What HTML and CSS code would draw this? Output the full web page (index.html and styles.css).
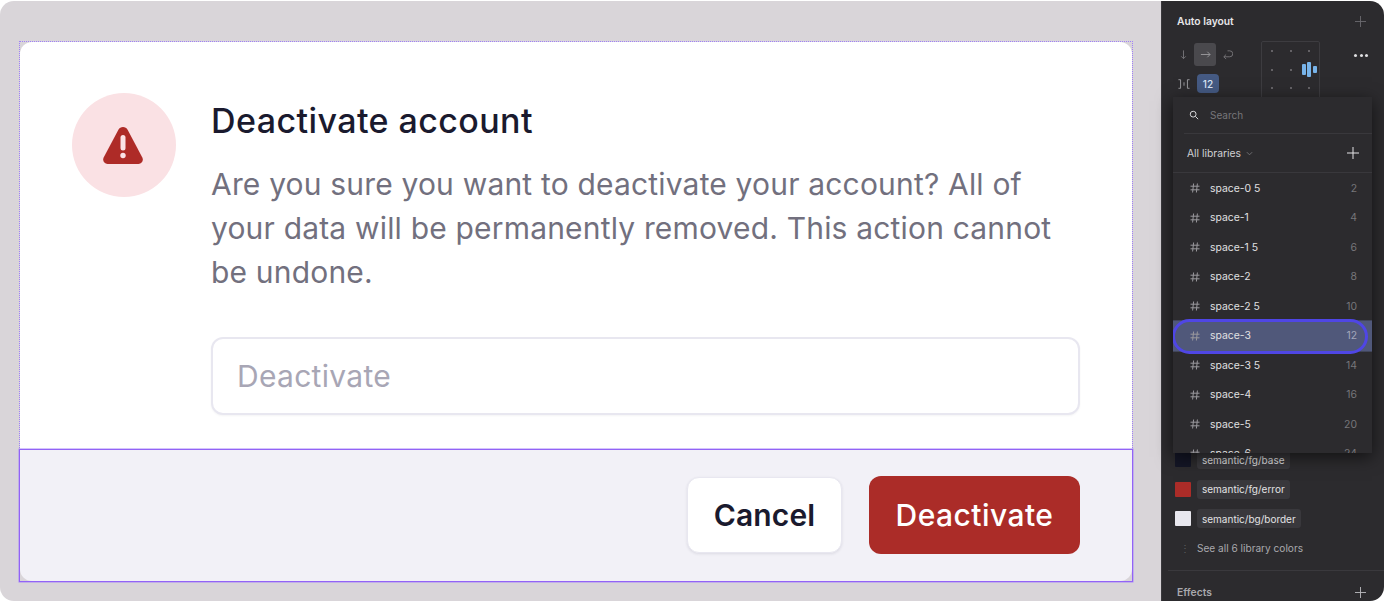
FILE: index.html
```html
<!DOCTYPE html>
<html lang="en">
<head>
<meta charset="utf-8">
<title>Deactivate account</title>
<link rel="stylesheet" href="styles.css">
</head>
<body>
<svg class="defs" width="0" height="0"><defs><symbol id="hash" viewBox="0 0 10 10"><path d="M3.600.5L2.600 9.500M7.400.5L6.400 9.500M.5 3.200h9M.5 6.800h9"/></symbol></defs></svg>
<div class="screen">
  <main class="canvas">
    <section class="dialog">
      <div class="dialog-body">
        <div class="alert-badge">
          <svg width="40" height="37" viewBox="0 0 40 37"><path d="M20 0c2 0 3.600 1 4.600 2.800l14.600 27.400c1.700 3.200-.3 6.800-3.700 6.800H4.500C1.100 37-.9 33.400.8 30.200L15.400 2.800C16.400 1 18 0 20 0z" fill="#ae2b27"/><rect x="17.500" y="8" width="5" height="15.500" rx="2.500" fill="#fbe2e5"/><circle cx="20" cy="28.500" r="2.700" fill="#fbe2e5"/></svg>
        </div>
        <div class="dialog-copy">
          <h1 class="dialog-title">Deactivate account</h1>
          <p class="dialog-text">Are you sure you want to deactivate your account? All of your data will be permanently removed. This action cannot be undone.</p>
          <div class="confirm-input">Deactivate</div>
        </div>
      </div>
      <footer class="dialog-footer">
        <div class="footer-fill">
          <button class="btn btn-cancel">Cancel</button>
          <button class="btn btn-danger">Deactivate</button>
        </div>
      </footer>
    </section>
  </main>
  <aside class="panel">
    <div class="panel-top">
      <div class="section-head"><span class="section-title">Auto layout</span>
        <svg class="plus dim" viewBox="0 0 12 12"><path d="M6 0v12M0 6h12"/></svg></div>
      <div class="auto-grid">
        <div class="auto-controls">
          <div class="dir-row">
            <span class="dir"><svg viewBox="0 0 12 12"><path d="M6 1.500v9M3.500 8L6 10.500 8.500 8"/></svg></span>
            <span class="dir dir-active"><svg viewBox="0 0 12 12"><path d="M1 6h10M8 3l3 3-3 3"/></svg></span>
            <span class="dir"><svg viewBox="0 0 12 12"><path d="M6 2h2.500a3.250 3.250 0 0 1 0 6.500H2M4.500 6L2 8.500 4.500 11"/></svg></span>
          </div>
          <div class="gap-row">
            <svg class="gap-icon" viewBox="0 0 14 12"><path d="M.5 1H3v10H.5M13.500 1H11v10h2.500M7 4v4"/></svg>
            <span class="gap-value">12</span>
          </div>
        </div>
        <div class="align-box">
          <i></i><i></i><i></i><i></i><i></i>
          <span class="align-mark"><b></b><b></b><b></b></span>
          <i></i><i></i><i></i>
        </div>
        <span class="more"><u></u><u></u><u></u></span>
      </div>
    </div>
    <div class="panel-bottom">
      <div class="color-row"><span class="swatch swatch-base"></span><span class="color-name">semantic/fg/base</span></div>
      <div class="color-row"><span class="swatch swatch-error"></span><span class="color-name">semantic/fg/error</span></div>
      <div class="color-row"><span class="swatch swatch-border"></span><span class="color-name">semantic/bg/border</span></div>
      <div class="see-all"><span class="see-dots">⋮</span>See all 6 library colors</div>
      <div class="section-head effects"><span class="section-title dimmer">Effects</span>
        <svg class="plus" viewBox="0 0 12 12"><path d="M6 0v12M0 6h12"/></svg></div>
    </div>
    <div class="picker">
      <div class="picker-search">
        <svg viewBox="0 0 12 12"><circle cx="5" cy="5" r="3.500"/><path d="M7.600 7.600L11 11"/></svg>
        <span>Search</span>
      </div>
      <div class="picker-lib">
        <span class="lib-name">All libraries <svg viewBox="0 0 8 8"><path d="M1 2.500L4 5.500l3-3"/></svg></span>
        <svg class="plus bright" viewBox="0 0 12 12"><path d="M6 0v12M0 6h12"/></svg>
      </div>
      <ul class="picker-list">
        <li><svg class="hash"><use href="#hash"/></svg><span class="var">space-0 5</span><span class="num">2</span></li>
        <li><svg class="hash"><use href="#hash"/></svg><span class="var">space-1</span><span class="num">4</span></li>
        <li><svg class="hash"><use href="#hash"/></svg><span class="var">space-1 5</span><span class="num">6</span></li>
        <li><svg class="hash"><use href="#hash"/></svg><span class="var">space-2</span><span class="num">8</span></li>
        <li><svg class="hash"><use href="#hash"/></svg><span class="var">space-2 5</span><span class="num">10</span></li>
        <li class="selected"><svg class="hash"><use href="#hash"/></svg><span class="var">space-3</span><span class="num">12</span><span class="ring"></span></li>
        <li><svg class="hash"><use href="#hash"/></svg><span class="var">space-3 5</span><span class="num">14</span></li>
        <li><svg class="hash"><use href="#hash"/></svg><span class="var">space-4</span><span class="num">16</span></li>
        <li><svg class="hash"><use href="#hash"/></svg><span class="var">space-5</span><span class="num">20</span></li>
        <li><svg class="hash"><use href="#hash"/></svg><span class="var">space-6</span><span class="num">24</span></li>
      </ul>
    </div>
  </aside>
</div>
</body>
</html>
```
FILE: styles.css
```css
* { box-sizing: border-box; }
html, body { margin: 0; height: 100%; background: #fff; overflow: hidden; }
body { font-family: Inter, "Noto Sans", sans-serif; }
.defs { position: absolute; }
.screen { width: 1384px; height: 600px; display: flex; border-radius: 14px; overflow: hidden; margin-top: 1px; }

.canvas { width: 1161px; background: #d9d5d9; padding: 40px 0 0 19px; flex: none; }
.dialog { width: 1114px; height: 541px; display: flex; flex-direction: column; border: 1px dotted #9f7ff8; position: relative; }
.dialog-body { flex: 1; background: #fff; border-radius: 12px 12px 0 0; padding: 51px 52px 0 52px; display: flex; gap: 35px; }
.alert-badge { width: 104px; height: 104px; border-radius: 50%; background: #fae1e4; display: flex; align-items: center; justify-content: center; flex: none; padding-right: 2.500px; }
.dialog-copy { flex: 1; min-width: 0; }
.dialog-title { margin: 7px 0 0; font-size: 34px; line-height: 42px; font-weight: 500; color: #1a1a2e; letter-spacing: .42px; }
.dialog-text { margin: 20px 0 0; font-size: 30px; line-height: 44px; color: #72707e; letter-spacing: .18px; }
.confirm-input { margin-top: 43px; height: 78px; border: 2px solid #e8e7f0; border-radius: 12px; padding: 0 24px; display: flex; align-items: center; font-size: 30px; letter-spacing: .3px; color: #a8a6b5; background: #fff; box-shadow: 0 1px 2px rgba(30,30,60,.05); }
.dialog-footer { height: 133px; flex: none; border: 1px solid #9263f6; box-shadow: 0 0 0 .5px #a988f8; margin: 0 -1px -1px; }
.footer-fill { height: 100%; background: #f2f1f7; border-radius: 0 0 12px 12px; display: flex; justify-content: flex-end; align-items: center; gap: 27px; padding: 0 52px 2px 0; }
.btn { font-family: inherit; font-size: 30px; line-height: 1; border-radius: 12px; padding: 0; cursor: pointer; }
.btn-cancel { width: 155px; height: 76px; background: #fff; color: #1a1a2e; font-weight: 600; letter-spacing: .15px; border: 1px solid #e8e7f0; box-shadow: 0 1px 3px rgba(30,30,60,.1); }
.btn-danger { width: 211px; height: 78px; background: #ab2c28; color: #fff; font-weight: 500; border: 0; letter-spacing: .45px; }

.panel { flex: 1; background: #2c2b2e; position: relative; display: flex; flex-direction: column; justify-content: space-between; color: #eee; border-left: 1px solid #3a393d; }
.section-head { display: flex; align-items: center; justify-content: space-between; padding: 0 18px 0 15px; }
.panel-top .section-head { height: 40px; }
.section-title { font-size: 10.300px; font-weight: 600; color: #e6e6e8; }
.dimmer { color: #a9a9ad; }
.plus { width: 11px; height: 11px; fill: none; stroke: #b9b9bc; stroke-width: 1; flex: none; }
.plus.dim { stroke: #6a696d; }
.plus.bright { width: 12px; height: 12px; stroke: #e4e4e6; }

.auto-grid { display: flex; padding-left: 10px; align-items: flex-start; }
.auto-controls { width: 89px; padding-top: 2px; }
.dir-row { display: flex; height: 23px; align-items: center; }
.dir { width: 22px; height: 23px; display: flex; align-items: center; justify-content: center; border-radius: 3px; }
.dir svg { width: 11px; height: 11px; fill: none; stroke: #77767a; stroke-width: 1; }
.dir-active { background: #4a494d; }
.dir-active svg { stroke: #9b9a9e; }
.gap-row { display: flex; align-items: center; gap: 7px; margin-top: 8px; padding-left: 6px; }
.gap-icon { width: 12px; height: 12px; fill: none; stroke: #a9a9ad; stroke-width: 1; }
.gap-value { width: 22px; height: 19px; border-radius: 4px; background: #455a83; color: #dce6f5; font-size: 10px; font-weight: 500; display: flex; align-items: center; justify-content: center; }
.align-box { width: 59px; height: 60px; border: 1px solid #3d3c40; border-radius: 2px; display: grid; grid-template-columns: repeat(3, 18.500px); grid-template-rows: repeat(3, 18.500px); justify-content: center; align-content: start; place-items: center; }
.align-box i { width: 2px; height: 2px; border-radius: 50%; background: #77767a; }
.align-mark { display: flex; align-items: center; gap: 1.500px; }
.align-mark b { width: 4px; background: #78b4ea; border-radius: 1px; height: 11px; }
.align-mark b:nth-child(2) { height: 15px; }
.align-mark b:nth-child(3) { height: 7px; }
.more { display: flex; gap: 2.500px; margin: 13px 0 0 34px; }
.more u { width: 3px; height: 3px; border-radius: 50%; background: #e0e0e2; }

.panel-bottom { margin-bottom: -12px; }
.color-row { height: 29.500px; display: flex; align-items: center; padding-left: 13px; gap: 6px; }
.swatch { width: 16px; height: 15px; flex: none; border-radius: 1px; }
.swatch-base { background: #141626; }
.swatch-error { background: #ab2c28; }
.swatch-border { background: #e8e7ee; }
.color-name { background: #39383c; border-radius: 3px; padding: 0 5px; height: 19px; display: flex; align-items: center; font-size: 10px; color: #e2e2e4; }
.see-all { height: 37.500px; display: flex; align-items: center; font-size: 10.100px; color: #a9a9ad; margin-left: 6px; padding: 0 0 7px 12px; border-bottom: 1px solid #3a393d; }
.see-dots { width: 17px; color: #5d5c60; font-size: 10px; }
.effects { height: 42px; }

.picker { position: absolute; left: 11px; top: 96px; width: 199px; height: 356px; background: #2c2b2e; box-shadow: 0 4px 16px rgba(0,0,0,.6); overflow: hidden; }
.picker-search { height: 37px; display: flex; align-items: center; gap: 11px; margin-left: 11px; padding-left: 5px; border-bottom: 1px solid #39383c; font-size: 10px; color: #77767a; }
.picker-search svg { width: 10px; height: 10px; fill: none; stroke: #d5d5d8; stroke-width: 1.200; }
.picker-lib { height: 38.500px; padding: 1px 13px 0 14px; display: flex; align-items: center; justify-content: space-between; border-bottom: 1px solid #39383c; }
.lib-name { font-size: 10.300px; color: #d0d0d3; display: flex; align-items: center; gap: 5px; }
.lib-name svg { width: 7px; height: 7px; fill: none; stroke: #77767a; }
.picker-list { list-style: none; margin: 0; padding: 1px 0 0; }
.picker-list li { height: 29.500px; display: flex; align-items: center; padding: 0 15px 0 17px; position: relative; font-size: 10.400px; }
.hash { width: 10px; height: 10px; margin-right: 10px; fill: none; stroke: #9a999d; stroke-width: 1; flex: none; }
.var { flex: 1; color: #e0e0e2; }
.num { color: #77767a; }
.picker-list .selected { background: #50587a; box-shadow: 0 0 0 .6px #50587a; }
.picker-list .selected .num { color: #a3a7bb; }
.ring { position: absolute; left: -1px; right: 4px; top: -2.500px; bottom: -3px; border: 3px solid #4f46e5; border-radius: 18px; }
```
